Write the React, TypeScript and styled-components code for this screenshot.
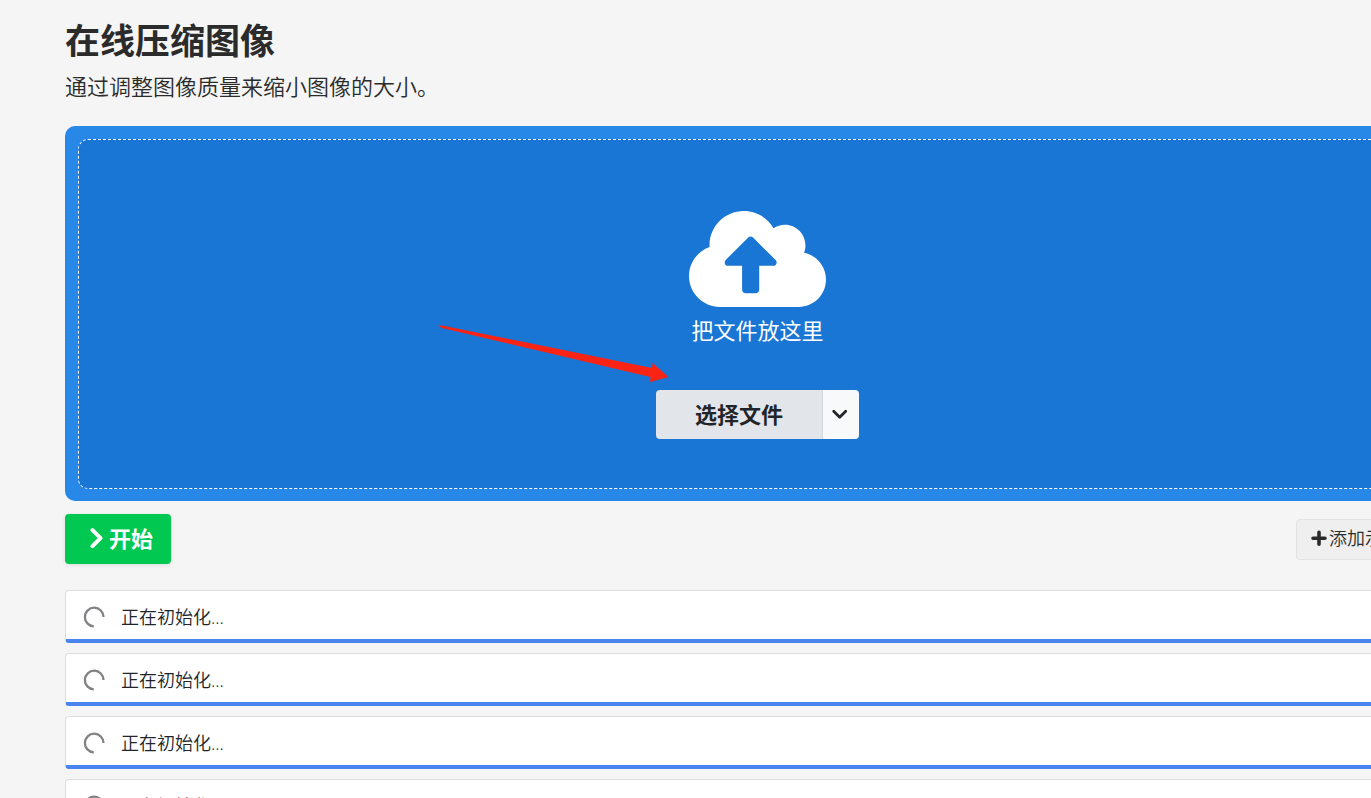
import React from "react";
import styled, { createGlobalStyle } from "styled-components";
import { FaCloudUploadAlt } from "react-icons/fa";

const GlobalStyle = createGlobalStyle`
  * { box-sizing: border-box; }
  html { height: 100%; overflow: hidden; }
  body {
    margin: 0;
    height: 100%;
    overflow: hidden;
    background: #f5f5f5;
    color: #2b2b2b;
    font-family: "Open Sans", "Noto Sans CJK SC", sans-serif;
    font-weight: 350;
    font-size: 18px;
    line-height: 26px;
  }
  button { font: inherit; color: inherit; margin: 0; }
`;

/* The content column runs past the right edge of the window. */
const Page = styled.main`
  margin: 0 -79px 0 65px;
  padding-top: 20px;
`;

const Title = styled.h1`
  margin: 0;
  font-size: 35px;
  line-height: 42px;
  font-weight: 700;
`;

const Subtitle = styled.p`
  margin: 8px 0 0;
  font-size: 22px;
  line-height: 32px;
`;

const DropZone = styled.section`
  margin-top: 24px;
  padding: 13px 13px 12px;
  border-radius: 10px;
  background: #2888e8;
`;

const DropArea = styled.div`
  display: flex;
  flex-direction: column;
  align-items: center;
  height: 350px;
  padding-top: 64px;
  border: 1px dashed #ffffff;
  border-radius: 10px;
  background: #1976d5;
`;

const CloudIcon = styled(FaCloudUploadAlt)`
  width: 137px;
  height: 110px;
  color: #ffffff;
`;

const DropText = styled.p`
  margin: 0;
  color: #ffffff;
  font-size: 22px;
  line-height: 32px;
  font-weight: 400;
`;

const ButtonGroup = styled.div`
  display: flex;
  height: 49px;
  margin-top: 44px;
  border-radius: 4px;
  overflow: hidden;
`;

const ChooseButton = styled.button`
  padding: 0 39px 2px;
  border: 0;
  border-right: 1px solid #d3d8e0;
  background: #e2e6ea;
  color: #212529;
  font-size: 22px;
  font-weight: 700;
`;

const MenuButton = styled.button`
  display: flex;
  align-items: center;
  width: 36px;
  padding: 0 8px;
  border: 0;
  background: #f8f9fa;
  color: #212529;
`;

const Actions = styled.div`
  display: flex;
  align-items: center;
  justify-content: space-between;
  margin-top: 13px;
`;

const StartButton = styled.button`
  display: flex;
  align-items: center;
  gap: 4px;
  height: 50px;
  padding: 0 18px 3px 24px;
  border: 0;
  border-radius: 4px;
  background: #00c851;
  color: #ffffff;
  font-size: 22px;
  font-weight: 700;
  box-shadow: 0 1px 4px rgba(0, 0, 0, 0.1);
`;

const AddButton = styled.button`
  display: flex;
  align-items: center;
  gap: 1px;
  height: 41px;
  padding: 0 12px 2px 13px;
  border: 1px solid #e2e2e4;
  border-radius: 4px;
  background: #efefef;
`;

const TaskList = styled.ul`
  display: flex;
  flex-direction: column;
  gap: 10px;
  margin: 26px 0 0;
  padding: 0;
  list-style: none;
`;

const Task = styled.li`
  display: flex;
  align-items: center;
  gap: 16px;
  height: 53px;
  padding: 3px 0 0 17px;
  border: 1px solid #dddddd;
  border-bottom: 4px solid #4a84ee;
  border-radius: 4px;
  background: #ffffff;
  color: #212529;
`;

const Arrow = styled.svg`
  position: absolute;
  left: 437px;
  top: 324px;
  pointer-events: none;
`;

const LineIcon = styled.svg`
  fill: none;
  stroke: currentColor;
  stroke-linecap: round;
  stroke-linejoin: round;
`;

const Spinner = () => (
  <svg width="22" height="22" viewBox="0 0 22 22" fill="none" aria-hidden="true">
    <path d="M20.500 11A9.300 9.300 0 1 0 10.800 20.300" stroke="#808285" strokeWidth="2.3" />
  </svg>
);

const tasks = [1, 2, 3, 4];

export default function App() {
  return (
    <>
      <GlobalStyle />
      <Page>
        <Title>在线压缩图像</Title>
        <Subtitle>通过调整图像质量来缩小图像的大小。</Subtitle>
        <DropZone>
          <DropArea>
            <CloudIcon aria-hidden="true" />
            <DropText>把文件放这里</DropText>
            <ButtonGroup>
              <ChooseButton type="button">选择文件</ChooseButton>
              <MenuButton type="button" aria-label="更多来源">
                <LineIcon width="18" height="14" viewBox="0 0 18 14" strokeWidth="2.8">
                  <path d="M2.700 3.200l6 6 6-6" />
                </LineIcon>
              </MenuButton>
            </ButtonGroup>
          </DropArea>
        </DropZone>
        <Actions>
          <StartButton type="button">
            <LineIcon width="16" height="22" viewBox="0 0 16 22" strokeWidth="4">
              <path d="M3.500 3.200l8 8-8 8" />
            </LineIcon>
            开始
          </StartButton>
          <AddButton type="button">
            <LineIcon width="18" height="18" viewBox="0 0 18 18" strokeWidth="3.6">
              <path d="M9 3.300v12M3 9.300h12" />
            </LineIcon>
            添加示例文件
          </AddButton>
        </Actions>
        <TaskList>
          {tasks.map((id) => (
            <Task key={id}>
              <Spinner />
              正在初始化...
            </Task>
          ))}
        </TaskList>
      </Page>
      <Arrow width="234" height="60" viewBox="0 0 234 60" aria-hidden="true">
        <path d="M1 1.500L5 1.500L215 44L215.500 39L231.500 53L213 58L213.500 53L5 4Z" fill="#fb2313" />
      </Arrow>
    </>
  );
}
